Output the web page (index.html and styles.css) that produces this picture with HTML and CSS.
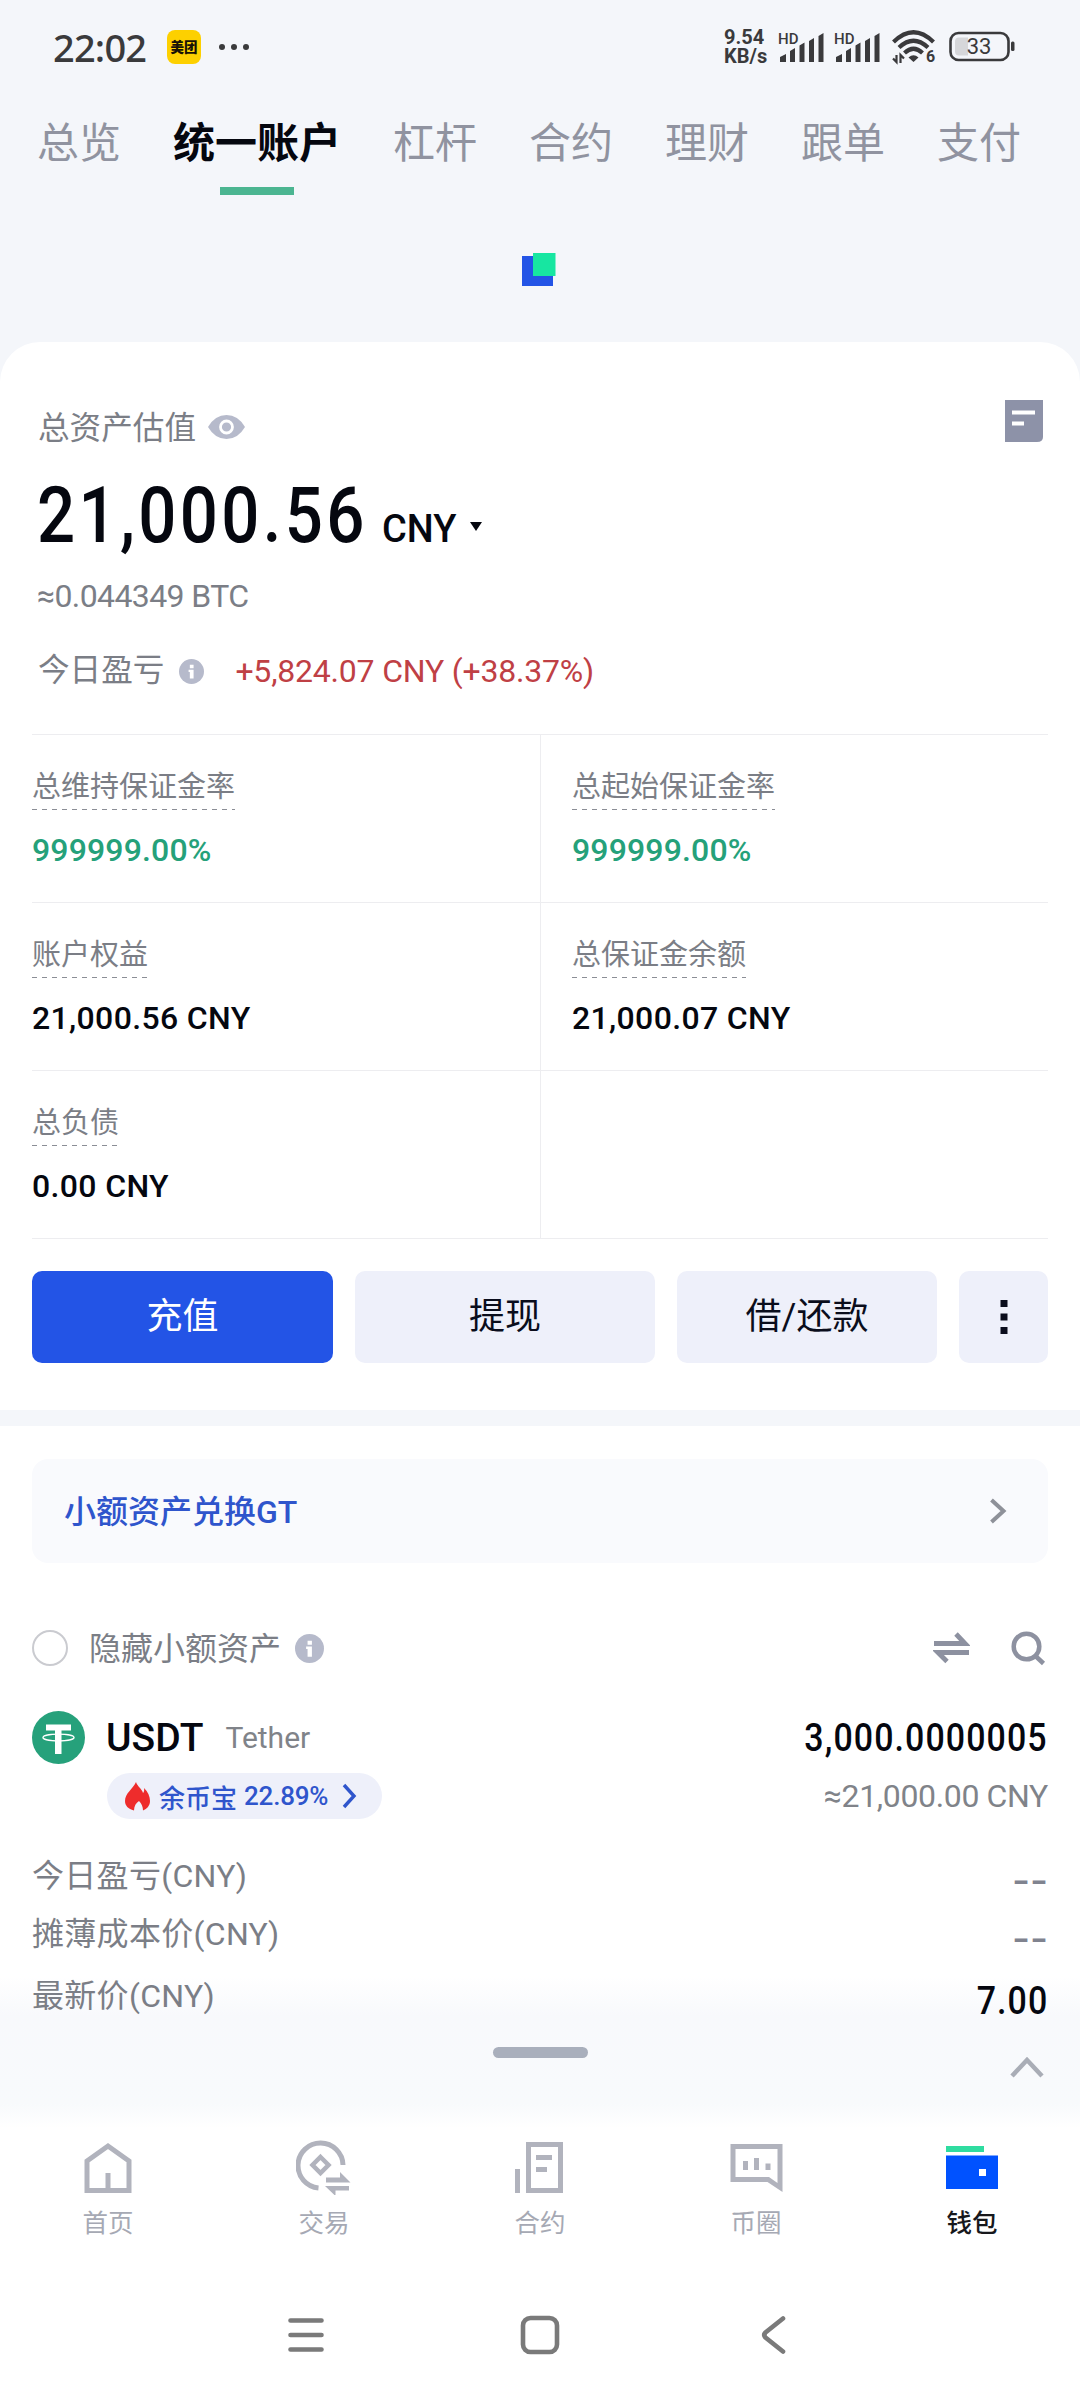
FILE: index.html
```html
<!DOCTYPE html>
<html lang="zh-CN">
<head>
<meta charset="utf-8">
<title>统一账户</title>
<link rel="stylesheet" href="styles.css">
</head>
<body>
<header class="status">
  <span class="clock">22:02</span>
  <span class="app-badge">美团</span>
  <svg class="more" width="30" height="8" viewBox="0 0 30 8"><g fill="#3a3a3c"><circle cx="3" cy="4" r="3"/><circle cx="15" cy="4" r="3"/><circle cx="27" cy="4" r="3"/></g></svg>
  <span class="speed"><b>9.54</b><b>KB/s</b></span>
  <svg class="signal" width="47" height="32" viewBox="0 0 47 32"><text class="hd" x="0" y="12.5">HD</text><g fill="#3a3a3c"><path d="M2 31v-5l6-3v8zM12 31V20l5-3v14zM21.500 31V14.500l5-3V31zM31 31V10l5-3v24zM40.500 31V5l5-3v29z"/></g></svg>
  <svg class="signal signal-2" width="47" height="32" viewBox="0 0 47 32"><text class="hd" x="0" y="12.5">HD</text><g fill="#3a3a3c"><path d="M2 31v-5l6-3v8zM12 31V20l5-3v14zM21.500 31V14.500l5-3V31zM31 31V10l5-3v24zM40.500 31V5l5-3v29z"/></g></svg>
  <svg class="wifi" width="44" height="38" viewBox="0 -2 44 38"><g fill="none" stroke="#3a3a3c" stroke-width="4.200"><path d="M1.500 12Q21.500-7.500 41.500 12"/><path d="M7 17.500Q21.500 4 36 17.500"/><path d="M12.500 23Q21.500 14.500 30.500 23"/></g><path d="M16.500 27.500Q21.500 23 26.500 27.500L21.500 32z" fill="#3a3a3c"/><path d="M4.500 25v7L1 28.500M8.500 33v-8L12 28.500" fill="none" stroke="#3a3a3c" stroke-width="2.200"/><text class="wifi-gen" x="34" y="32">6</text></svg>
  <svg class="battery" width="68" height="32" viewBox="0 0 68 32"><rect x="1.500" y="2" width="58" height="27" rx="8" fill="none" stroke="#3a3a3c" stroke-width="2.600"/><path d="M10 6.500h9v18h-9q-4 0-4-4v-10q0-4 4-4z" fill="#d6d7da"/><rect x="62" y="10.500" width="3.500" height="9.500" rx="1.500" fill="#3a3a3c"/><text class="level" x="30" y="23">33</text></svg>
</header>

<nav class="tabs">
  <a class="tab">总览</a><a class="tab active">统一账户</a><a class="tab">杠杆</a><a class="tab">合约</a><a class="tab">理财</a><a class="tab">跟单</a><a class="tab">支付</a>
</nav>

<div class="refresh">
  <svg width="36" height="34" viewBox="0 0 36 34"><path d="M0 3h31v30H0z" fill="#2354e6"/><path d="M11 0h22.500v23H11z" fill="#17e6a1"/></svg>
</div>

<main>
<section class="card">
  <div class="card-head">
    <span class="caption">总资产估值</span>
    <svg class="eye" width="37" height="24" viewBox="0 0 37 24"><path d="M0 12Q7 0 18.500 0T37 12Q30 24 18.500 24T0 12z" fill="#b6bacb"/><circle cx="18.500" cy="12" r="6" fill="none" stroke="#fff" stroke-width="2.800"/></svg>
    <svg class="note" width="38" height="42" viewBox="0 0 38 42"><path d="M0 0h38v37q0 5-6 5H0z" fill="#8d92a8"/><path d="M7 12.500h23M7 23.500h12" stroke="#fff" stroke-width="4"/></svg>
  </div>
  <div class="amount"><span class="total"><span class="digits">21,000.56</span></span><span class="unit">CNY</span><svg class="drop" width="12" height="9" viewBox="0 0 12 9"><path d="M0 0h12L6 9z" fill="#05070f"/></svg></div>
  <div class="btc">≈0.044349 BTC</div>
  <div class="today"><span class="caption">今日盈亏</span>
    <svg class="info" width="25" height="25" viewBox="0 0 30 30"><circle cx="15" cy="15" r="15" fill="#b6bacb"/><path d="M13 7h4.500v4H13zM11.500 13h6v10.500h-4.500V15.500h-1.500z" fill="#fff"/></svg>
    <span class="pnl">+5,824.07 CNY (+38.37%)</span></div>

  <div class="metrics">
    <div class="cell"><span class="label">总维持保证金率</span><span class="value green">999999.00%</span></div>
    <div class="cell"><span class="label">总起始保证金率</span><span class="value green">999999.00%</span></div>
    <div class="cell"><span class="label">账户权益</span><span class="value">21,000.56 CNY</span></div>
    <div class="cell"><span class="label">总保证金余额</span><span class="value">21,000.07 CNY</span></div>
    <div class="cell"><span class="label">总负债</span><span class="value">0.00 CNY</span></div>
    <div class="cell"></div>
  </div>

  <div class="actions">
    <button class="btn primary">充值</button><button class="btn">提现</button><button class="btn">借/还款</button>
    <button class="btn" aria-label="更多"><svg width="8" height="36" viewBox="0 0 8 36"><path d="M.5 1h7v7h-7zM.5 14.500h7v7h-7zM.5 28h7v7h-7z" fill="#0a0d1c"/></svg></button>
  </div>
</section>

<section class="assets">
  <a class="banner"><span>小额资产兑换GT</span><svg width="18" height="26" viewBox="0 0 18 26"><path d="M2.500 2l12 11-12 11" fill="none" stroke="#8e9199" stroke-width="4"/></svg></a>

  <div class="filter">
    <span class="check"></span><span class="filter-text">隐藏小额资产</span>
    <svg class="info" width="29" height="29" viewBox="0 0 30 30"><circle cx="15" cy="15" r="15" fill="#b6bacb"/><path d="M13 7h4.500v4H13zM11.500 13h6v10.500h-4.500V15.500h-1.500z" fill="#fff"/></svg>
    <svg class="swap" width="37" height="34" viewBox="0 0 37 34"><path d="M1 12.500h31L23 3M36 21.500H5l9 9" fill="none" stroke="#8d91a0" stroke-width="4.800"/></svg>
    <svg class="search" width="35" height="35" viewBox="0 0 35 35"><circle cx="15.500" cy="15.500" r="12.800" fill="none" stroke="#8d91a0" stroke-width="4.500"/><path d="M24.500 25l8 7.500" stroke="#8d91a0" stroke-width="4.500"/></svg>
  </div>

  <div class="coin">
    <svg class="tether" width="53" height="53" viewBox="0 0 53 53"><circle cx="26.500" cy="26.500" r="26.500" fill="#26a17b"/><path d="M14 13.500h25v6H29.500V43h-6.500V19.500H14z" fill="#fff"/><ellipse cx="26.500" cy="26.500" rx="15.500" ry="3.400" fill="none" stroke="#fff" stroke-width="1.400"/></svg>
    <span class="symbol">USDT</span><span class="name">Tether</span><span class="qty">3,000.0000005</span>
  </div>
  <div class="coin-sub">
    <span class="pill"><svg width="25" height="29" viewBox="0 0 25 29"><path d="M11 0c1 4 6 7 7 11 1-1 1.500-2.500 1-5 4 3.500 6 9 6 13 0 4.500-3 8-7 9.500 0-4-1.500-7-4-9.500-3 2-5 5-5 9.500C3 27 0 23.500 0 19 0 11 8 7 11 0z" fill="#ee2c2c"/></svg><span class="pill-name">余币宝</span><span class="rate">22.89%</span><svg class="go" width="15" height="26" viewBox="0 0 15 26"><path d="M2 2l10 11L2 24" fill="none" stroke="#2f55cc" stroke-width="3.400"/></svg></span>
    <span class="approx">≈21,000.00 CNY</span>
  </div>
  <dl class="details">
    <div class="row"><dt>今日盈亏(CNY)</dt><dd class="none">--</dd></div>
    <div class="row"><dt>摊薄成本价(CNY)</dt><dd class="none">--</dd></div>
    <div class="row last"><dt>最新价(CNY)</dt><dd class="price">7.00</dd></div>
  </dl>
</section>

<div class="sheet">
  <span class="handle"></span>
  <svg class="caret" width="34" height="22" viewBox="0 0 34 22"><path d="M2 20L17 4l15 16" fill="none" stroke="#a9adb6" stroke-width="4.500"/></svg>
</div>
</main>

<nav class="bottom">
  <a class="item"><svg width="56" height="56" viewBox="0 0 56 56"><path d="M7 51.500V22L28 7l21 15v29.500zM28 51V34" fill="none" stroke="#b1b3bd" stroke-width="5"/></svg>首页</a>
  <a class="item"><svg width="56" height="56" viewBox="0 0 56 56"><g fill="none" stroke="#b1b3bd"><path d="M47 26A22.500 22.500 0 1 0 22.500 49" stroke-width="5"/><path d="M24.500 18l8 8-8 8-8-8z" stroke-width="4.500"/></g><path d="M30 38.500h14V33l10.500 10.500H30zM53 47h-24L39.500 57V51.500H53z" fill="#b1b3bd"/></svg>交易</a>
  <a class="item"><svg width="56" height="56" viewBox="0 0 56 56"><path d="M5.500 30v24M16.500 5.500h32v46h-32zM24 18.500h16M24 30.500h11" fill="none" stroke="#b1b3bd" stroke-width="5"/></svg>合约</a>
  <a class="item"><svg width="56" height="56" viewBox="0 0 56 56"><path d="M2.500 5h52v48L39.500 43h-37zM7.500 10v28H41l8.500 6V10z" fill="#b1b3bd" fill-rule="evenodd"/><path d="M17.500 22v9M28.500 19v12M40 24.500V31" stroke="#b1b3bd" stroke-width="5"/></svg>币圈</a>
  <a class="item current"><svg width="56" height="56" viewBox="0 0 56 56"><path d="M2 7h38v6H2z" fill="#2fdca0"/><path d="M2 16.500h52V50H2z" fill="#0052ff"/><path d="M35 30h7v7h-7z" fill="#fff"/></svg>钱包</a>
</nav>

<footer class="system">
  <svg width="40" height="40" viewBox="0 0 40 40"><path d="M4.500 5.500h31M4.500 20h31M4.500 34.500h31" stroke="#7a7a7a" stroke-width="4.600" stroke-linecap="round"/></svg>
  <svg width="40" height="40" viewBox="0 0 40 40"><rect x="3" y="3" width="34" height="34" rx="7.500" fill="none" stroke="#7a7a7a" stroke-width="4.600"/></svg>
  <svg width="40" height="40" viewBox="0 0 40 40"><path d="M29 3.500L11.500 17.500q-2.500 2.500 0 5L29 36.500" fill="none" stroke="#7a7a7a" stroke-width="4.600" stroke-linecap="round"/></svg>
</footer>
</body>
</html>
```
FILE: styles.css
```css
* { box-sizing: border-box; }
body {
  margin: 0;
  width: 1080px;
  height: 2400px;
  display: flex;
  flex-direction: column;
  background: #f4f6fa;
  color: #05070f;
  font-family: Roboto, "Noto Sans CJK SC", sans-serif;
  overflow: hidden;
}
svg { display: block; flex: none; }
span, a, dt, dd, .btc { white-space: nowrap; }

/* status bar */
.status { display: flex; align-items: center; height: 94px; padding-left: 53px; color: #3a3a3c; }
.clock { width: 114px; font: 500 38px/44px "Noto Sans", sans-serif; letter-spacing: -0.800px; }
.app-badge {
  width: 34px; height: 34px; border-radius: 8px; background: #fdd000; color: #171206;
  font-size: 13.5px; font-weight: 900; line-height: 34px; text-align: center;
}
.more { margin-left: 18px; }
.speed { display: flex; flex-direction: column; width: 54px; margin-left: 475px; font-size: 20px; line-height: 19px; }
.speed b { font-weight: 700; }
.signal-2 { margin-left: 9px; }
.hd { font: 500 15px Roboto, sans-serif; fill: #3a3a3c; }
.wifi { margin-left: 11px; }
.wifi-gen { font: 700 16px Roboto, sans-serif; fill: #3a3a3c; }
.battery { margin-left: 13px; }
.level { font: 400 22px Roboto, sans-serif; fill: #3a3a3c; text-anchor: middle; }

/* account tabs */
.tabs { display: flex; gap: 52px; height: 101px; padding: 20px 0 0 37px; }
.tab { display: flex; flex-direction: column; align-items: center; justify-content: space-between; font-size: 42px; line-height: 60px; color: #9093a0; }
.active { color: #05070f; font-weight: 700; }
.active::after { content: ""; width: 74px; height: 8px; background: #4bb591; }

.refresh { height: 147px; padding: 58px 0 0 522px; }

/* overview card */
main { background: #fff; border-radius: 40px 40px 0 0; }
.card { height: 1068px; padding: 58px 32px 0; }
.card-head { display: flex; align-items: flex-start; height: 48px; padding: 0 5px 0 6px; }
.caption { font-size: 31.600px; line-height: 40px; color: #7b7e86; }
.card-head .caption { padding-top: 9px; }
.eye { margin: 15px 0 0 12px; }
.note { margin-left: auto; }
.amount { display: flex; align-items: baseline; height: 80px; margin-top: 26px; padding: 2px 0 0 5px; line-height: 80px; }
.total { width: 326px; font-size: 78px; font-weight: 500; letter-spacing: 3.900px; }
.digits { display: inline-block; transform: scaleX(.86); transform-origin: left; }
.unit { margin-left: 19px; font-size: 38px; font-weight: 500; }
.drop { margin-left: 14px; transform: translateY(-11px); }
.btc { margin-top: 22px; padding-left: 5px; font-size: 32px; line-height: 40px; letter-spacing: -0.600px; color: #7b7e86; }
.today { display: flex; align-items: center; height: 40px; margin-top: 35px; padding-left: 6px; }
.today .info { margin-left: 15px; }
.pnl { margin-left: 31px; font-size: 32px; line-height: 40px; letter-spacing: -0.200px; color: #bf4045; }

.metrics { display: grid; grid-template-columns: 509px 507px; grid-auto-rows: 168px; margin-top: 43px; border-bottom: 1px solid #ededf0; }
.cell { display: flex; flex-direction: column; align-items: flex-start; padding-top: 35px; border-top: 1px solid #ededf0; }
.cell:nth-child(odd) { border-right: 1px solid #ededf0; }
.cell:nth-child(even) { padding-left: 31px; }
.label {
  height: 40px; font-size: 29px; line-height: 34px; color: #7b7e86;
  background: repeating-linear-gradient(90deg, #8b8e96 0 5px, transparent 5px 10px) left bottom / 100% 1.500px no-repeat;
}
.value { margin-top: 20px; font-size: 32px; font-weight: 500; line-height: 40px; letter-spacing: .350px; }
.green { color: #25a17a; letter-spacing: .150px; }

.actions { display: grid; grid-template-columns: 301px 300px 260px 89px; gap: 22px; height: 92px; margin-top: 32px; }
.btn {
  display: flex; align-items: center; justify-content: center; padding: 0; border: 0; border-radius: 10px;
  background: #eef0fa; color: #0a0d1c; font: 400 36px/44px Roboto, "Noto Sans CJK SC", sans-serif;
}
.primary { background: #2354e6; color: #fff; }

/* asset list */
.assets {
  height: 606px; padding: 33px 32px 0; border-top: 16px solid #f4f6fa;
  background: linear-gradient(#fff, #f8f9fc) left bottom / 100% 40px no-repeat;
}
.banner {
  display: flex; align-items: center; justify-content: space-between; height: 104px; padding: 0 41px 0 32px;
  border-radius: 16px; background: #f9fafd; color: #2f55cc; font-size: 32px; font-weight: 500; line-height: 40px;
}
.banner span { padding-top: 2px; }
.filter { display: flex; align-items: center; height: 40px; margin-top: 65px; }
.check { width: 36px; height: 36px; border: 2.500px solid #cacbd0; border-radius: 50%; }
.filter-text { margin-left: 21px; padding-top: 1px; font-size: 32px; line-height: 40px; color: #7b7e86; }
.filter .info { margin-left: 14px; }
.swap { margin-left: auto; }
.search { margin: 0 2px 0 41px; }
.coin { display: flex; align-items: center; height: 54px; margin-top: 42px; padding-top: 1px; }
.symbol { margin-left: 21px; font-size: 39px; font-weight: 500; }
.name { margin-left: 22px; font-size: 30px; color: #808389; }
.qty, .price { margin-left: auto; font-size: 39px; font-weight: 500; letter-spacing: 1.250px; transform: scaleX(.87); transform-origin: right; }
.coin-sub { display: flex; align-items: center; height: 46px; margin: 9px 0 0 75px; }
.pill { display: flex; align-items: center; width: 275px; height: 46px; padding-left: 18px; border-radius: 23px; background: #eef0fa; color: #2f55cc; font-weight: 500; }
.pill-name { margin-left: 9px; font-size: 26px; }
.rate { margin-left: 7px; font-size: 26px; letter-spacing: -0.200px; }
.go { margin-left: 14px; }
.approx { margin-left: auto; font-size: 32px; letter-spacing: -0.350px; color: #808389; }
.details { margin: 37px 0 0; }
.row { display: flex; justify-content: space-between; height: 40px; margin-bottom: 18px; }
.last { margin-top: 22px; }
dt { font-size: 32px; line-height: 40px; letter-spacing: .300px; color: #7b7e86; }
dd { margin: 0; padding-top: 5px; font-size: 38px; font-weight: 500; line-height: 40px; }
.none { padding-top: 4px; font: 500 39px/40px Inter, sans-serif; color: #80838f; }

/* bottom sheet peek */
.sheet {
  display: grid; grid-template-columns: 1fr auto 1fr; align-items: start; height: 120px; padding: 31px 36px 0;
  background: linear-gradient(#f8f9fc, #f8fafc 88px, #fff 112px);
}
.handle { grid-column: 2; width: 95px; height: 11px; border-radius: 6px; background: #a9afbc; }
.caret { justify-self: end; margin-top: 9px; }

.bottom { display: grid; grid-template-columns: repeat(5, 1fr); height: 144px; padding-top: 3px; background: #fff; }
.item { display: flex; flex-direction: column; align-items: center; gap: 13px; font-size: 25.500px; line-height: 30px; color: #a6a9b4; }
.current { color: #17181c; font-weight: 500; }
.system { display: flex; justify-content: center; gap: 194px; flex: 1; padding-top: 35px; background: #fff; }
```
